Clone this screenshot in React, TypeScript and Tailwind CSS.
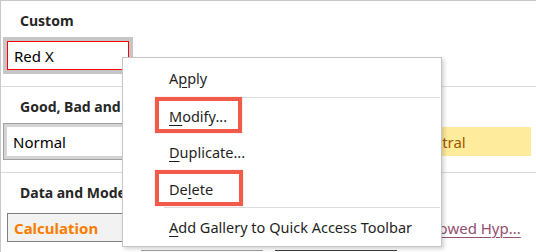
import type { ReactNode } from "react";

type Style = {
  name: string;
  slot: string;
  cell: string;
};

const plain = "p-[4px]";

const customStyles: Style[] = [
  { name: "Red X", slot: "p-[4px] bg-[#c6c6c6]", cell: "px-[6px] bg-white border border-[#ff0000] text-black" },
];

const goodBad: Style[] = [
  { name: "Normal", slot: "p-[3px] bg-[#d4d4d4] border border-[#a0a0a0]", cell: "px-[6px] bg-white text-black" },
  { name: "", slot: plain, cell: "bg-[#ffc7ce]" },
  { name: "", slot: plain, cell: "bg-[#c6efce]" },
  { name: "Neutral", slot: plain, cell: "px-[4px] bg-[#ffeb9c] text-[#9c5700]" },
];

const dataModel: Style[] = [
  { name: "Calculation", slot: plain, cell: "px-[6px] bg-[#f2f2f2] border border-[#7f7f7f] text-[#fa7d00] font-bold" },
  { name: "", slot: plain, cell: "bg-[#a5a5a5] border-[3px] border-double border-[#3f3f3f]" },
  { name: "", slot: plain, cell: "" },
  { name: "Followed Hyp...", slot: plain, cell: "px-[5px] text-[#954f72] underline decoration-1 underline-offset-[3px]" },
  { name: "", slot: plain, cell: "" },
  { name: "", slot: plain, cell: "border-t border-[#a0a0a0]" },
  { name: "", slot: plain, cell: "border-t border-[#3f3f3f]" },
  { name: "", slot: plain, cell: "" },
];

function Slot({ s }: { s: Style }) {
  return (
    <div className={`h-[37px] ${s.slot}`}>
      <div className={`h-full flex items-center text-[15px] leading-[20px] whitespace-nowrap overflow-hidden ${s.cell}`}>
        {s.name}
      </div>
    </div>
  );
}

function Section({ title, items, border }: { title: string; items: Style[]; border?: boolean }) {
  return (
    <div className={border ? "border-t border-[#dadada]" : ""}>
      <div className="h-[36px] pl-[19px] pt-[10px] text-[14px] leading-[20px] font-bold text-[#262626] whitespace-nowrap">
        {title}
      </div>
      <div className="grid grid-cols-[130px_130px_130px_130px] gap-x-[4px] pl-[2px]">
        {items.map((s, i) => (
          <Slot key={i} s={s} />
        ))}
      </div>
      <div className="h-[12px]" />
    </div>
  );
}

function Item({ h, children }: { h: string; children: ReactNode }) {
  return (
    <div className={`${h} flex items-center pl-[46px] text-[14.5px] leading-[20px] text-[#1f1f1f] whitespace-nowrap`}>
      {children}
    </div>
  );
}

function Key({ children }: { children: ReactNode }) {
  return <span className="underline decoration-1 underline-offset-[3px]">{children}</span>;
}

export default function App() {
  return (
    <div className="relative w-[536px] h-[252px] overflow-hidden bg-white border-l border-t border-[#c8c8c8] font-['Noto_Sans',sans-serif]">
      <Section title="Custom" items={customStyles} />
      <Section title="Good, Bad and Neutral" items={goodBad} border />
      <Section title="Data and Model" items={dataModel} border />

      <div className="absolute left-[121px] top-[56px] w-[320px] h-[190px] bg-white border border-[#c6c6c6] shadow-[2px_2px_4px_rgba(0,0,0,0.18)]">
        <Item h="h-[39px]">
          A<Key>p</Key>ply
        </Item>
        <div className="ml-[41px] mr-[1px] h-px bg-[#dcdcdc]" />
        <Item h="h-[36px]">
          <Key>M</Key>odify...
        </Item>
        <Item h="h-[36px]">
          <Key>D</Key>uplicate...
        </Item>
        <Item h="h-[37px]">
          De<Key>l</Key>ete
        </Item>
        <div className="ml-[41px] mr-[1px] h-px bg-[#dcdcdc]" />
        <Item h="h-[38px]">
          <Key>A</Key>dd Gallery to Quick Access Toolbar
        </Item>

        <div className="absolute left-[32px] top-[39px] w-[87px] h-[36px] border-4 border-[#f25a4a] shadow-[0_0_1px_#f8a8a0]" />
        <div className="absolute left-[32px] top-[112px] w-[88px] h-[36px] border-4 border-[#f25a4a] shadow-[0_0_1px_#f8a8a0]" />
      </div>
    </div>
  );
}
